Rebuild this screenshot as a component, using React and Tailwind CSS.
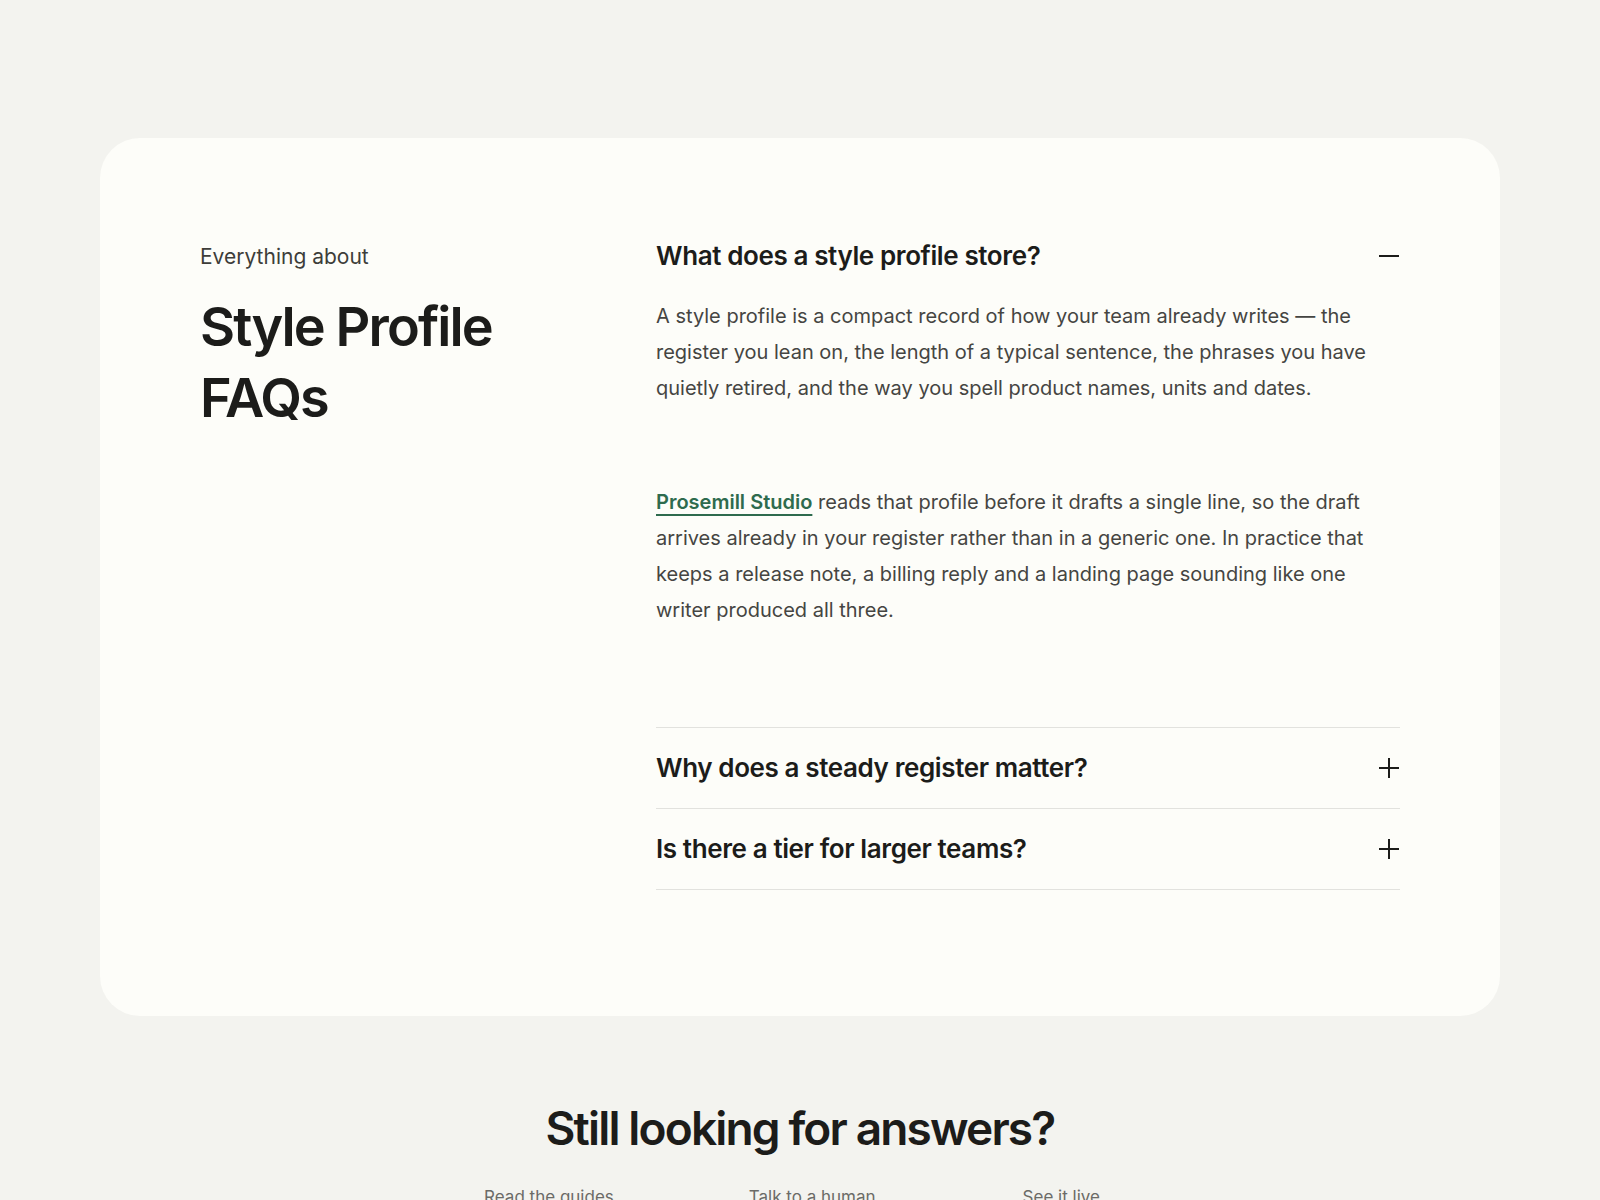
import { useState } from "react";

const faqs = [
  {
    q: "What does a style profile store?",
    a: "A style profile is a compact record of how your team already writes — the register you lean on, the length of a typical sentence, the phrases you have quietly retired, and the way you spell product names, units and dates.",
  },
  { q: "Why does a steady register matter?", a: "" },
  { q: "Is there a tier for larger teams?", a: "" },
];

function Icon({ open }) {
  return (
    <svg width="22" height="22" viewBox="0 0 22 22" className="shrink-0 text-[#1c1c1a]">
      <path d="M1 11h20" stroke="currentColor" strokeWidth="2" />
      {!open && <path d="M11 1v20" stroke="currentColor" strokeWidth="2" />}
    </svg>
  );
}

export default function App() {
  const [open, setOpen] = useState(0);

  return (
    <div
      className="min-h-screen bg-[#f3f3ef] pt-[138px] text-[#1c1c1a]"
      style={{ fontFamily: "Inter, 'Noto Sans', sans-serif" }}
    >
      <section className="mx-[100px] rounded-[40px] bg-[#fdfdf9] px-[100px] pt-[102px] pb-[126px] flex">
        {/* Left */}
        <div className="w-[456px] shrink-0">
          <div className="mt-[3px] text-[21px] leading-[28px] text-[#3d3d3a]">Everything about</div>
          <h1 className="mt-[20px] text-[54px] leading-[71px] font-semibold tracking-[-0.035em]">
            Style Profile
            <br />
            FAQs
          </h1>
        </div>

        {/* Right */}
        <div className="flex-1">
          {faqs.map((item, i) => {
            const isOpen = open === i;
            return (
              <div key={item.q} className={i === 0 ? "" : "border-t border-[#e2e2de]"}>
                <button
                  type="button"
                  onClick={() => setOpen(isOpen ? -1 : i)}
                  className={[
                    "w-full flex items-center justify-between text-left",
                    i === 0 ? "pt-0 pb-[26px]" : "py-[24px]",
                  ].join(" ")}
                >
                  <span className="text-[26px] leading-[32px] font-semibold tracking-[-0.015em]">{item.q}</span>
                  <Icon open={isOpen} />
                </button>
                {isOpen ? (
                  <div className="pb-[99px] text-[20px] leading-[36px] text-[#454542]">
                    <p className="pr-[20px]">{item.a}</p>
                    <p className="mt-[78px] pr-[20px]">
                      <a href="#" className="font-semibold text-[#2e6b4e] underline underline-offset-[5px] decoration-[1.5px]">
                        Prosemill Studio
                      </a>{" "}
                      reads that profile before it drafts a single line, so the draft arrives already in your register rather than in a generic one. In practice that keeps a release note, a billing reply and a landing page sounding like one writer produced all three.
                    </p>
                  </div>
                ) : null}
              </div>
            );
          })}
          <div className="border-t border-[#e2e2de]" />
        </div>
      </section>

      <section className="pt-[84px] text-center">
        <h2 className="text-[46px] leading-[56px] font-semibold tracking-[-0.04em]">Still looking for answers?</h2>
        <div className="mt-[29px] flex justify-center pr-[16px] text-[17px] leading-[24px] text-[#6b6b67]">
          <a href="#">Read the guides</a>
          <a href="#" className="ml-[135px]">Talk to a human</a>
          <a href="#" className="ml-[147px]">See it live</a>
        </div>
      </section>
    </div>
  );
}
